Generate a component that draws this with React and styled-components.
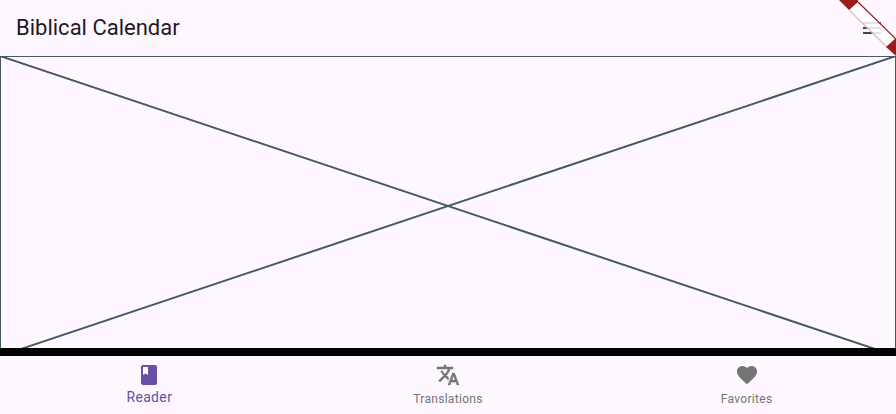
import React from 'react';
import styled, { createGlobalStyle } from 'styled-components';

const Global = createGlobalStyle`
  html, body { margin: 0; padding: 0; background: #fef7ff; }
  body { font-family: Roboto, "Liberation Sans", sans-serif; overflow: hidden; }
`;

const Screen = styled.div`
  position: relative;
  width: 896px;
  height: 414px;
  display: flex;
  flex-direction: column;
  overflow: hidden;
  background: #fef7ff;
`;

const AppBar = styled.header`
  height: 56px;
  flex: none;
  display: flex;
  align-items: center;
  justify-content: space-between;
  padding: 0 12px 0 16px;
  box-sizing: border-box;
`;

const Title = styled.h1`
  margin: 0;
  font-size: 22px;
  font-weight: 400;
  line-height: 28px;
  color: #1d1b20;
`;

const MenuIcon = styled.svg`
  width: 24px;
  height: 24px;
  fill: #49454f;
`;

const Ribbon = styled.svg`
  position: absolute;
  top: 0;
  right: 0;
  width: 80px;
  height: 60px;
  pointer-events: none;
`;

const Placeholder = styled.div`
  position: relative;
  height: 300px;
  flex: none;
  box-sizing: border-box;
  border: 1px solid #455a64;
  margin-bottom: -8px;
`;

const Cross = styled.svg`
  position: absolute;
  top: -1px;
  left: -1px;
  width: 896px;
  height: 300px;
  stroke: #455a64;
  stroke-width: 2;
  fill: none;
`;

const NavBar = styled.nav`
  position: relative;
  flex: 1;
  display: grid;
  grid-template-columns: repeat(3, 1fr);
  border-top: 8px solid #000;
  background: #fef7ff;
`;

const NavItem = styled.div`
  display: flex;
  flex-direction: column;
  align-items: center;
  padding-top: 7px;
  font-size: ${p => (p.$active ? '14px' : '12px')};
  line-height: ${p => (p.$active ? '20px' : '16px')};
  letter-spacing: ${p => (p.$active ? '0.35px' : '0.3px')};
  color: ${p => (p.$active ? '#6750a4' : '#757575')};
`;

const NavIcon = styled.svg`
  width: 24px;
  height: 24px;
  fill: currentColor;
  stroke: currentColor;
  stroke-width: ${p => (p.$bold ? '0.5' : '0')};
  margin-bottom: ${p => (p.$active ? '0' : '4px')};
`;

const items = [
  {
    label: 'Reader',
    active: true,
    d: 'M18 2H6c-1.1 0-2 .9-2 2v16c0 1.1.9 2 2 2h12c1.1 0 2-.9 2-2V4c0-1.1-.9-2-2-2zM6 4h5v8l-2.5-1.5L6 12V4z',
  },
  {
    label: 'Translations',
    bold: true,
    d: 'M12.87 15.07l-2.54-2.51.03-.03c1.74-1.94 2.98-4.17 3.71-6.53H17V4h-7V2H8v2H1v1.99h11.17C11.5 7.92 10.44 9.75 9 11.35 8.07 10.32 7.3 9.19 6.69 8h-2c.73 1.63 1.73 3.17 2.98 4.56l-5.09 5.02L4 19l5-5 3.11 3.11.76-2.04zM18.5 10h-2L12 22h2l1.12-3h4.75L21 22h2l-4.5-12zm-2.62 7l1.62-4.33L19.12 17h-3.24z',
  },
  {
    label: 'Favorites',
    d: 'M12 21.35l-1.45-1.32C5.4 15.36 2 12.28 2 8.5 2 5.42 4.42 3 7.5 3c1.74 0 3.41.81 4.5 2.09C13.09 3.81 14.76 3 16.5 3 19.58 3 22 5.42 22 8.5c0 3.78-3.4 6.86-8.55 11.54L12 21.35z',
  },
];

// faint cross lines on the white part of the ribbon
const ribbonTicks = [
  [859, 20, 868, 11],
  [868, 29, 877, 20],
  [877, 37, 886, 28],
];

export default function App() {
  return (
    <Screen>
      <Global />
      <AppBar>
        <Title>Biblical Calendar</Title>
        <MenuIcon viewBox="0 0 24 24"><path d="M3 18h18v-2H3v2zm0-5h18v-2H3v2zm0-7v2h18V6H3z" /></MenuIcon>
      </AppBar>
      <Placeholder>
        <Cross viewBox="0 0 896 300">
          <line x1="0" y1="0" x2="896" y2="300" />
          <line x1="896" y1="0" x2="0" y2="300" />
        </Cross>
      </Placeholder>
      <NavBar>
        {items.map(it => (
          <NavItem key={it.label} $active={it.active}>
            <NavIcon $active={it.active} $bold={it.bold} viewBox="0 0 24 24"><path d={it.d} /></NavIcon>
            {it.label}
          </NavItem>
        ))}
      </NavBar>
      <Ribbon viewBox="816 0 80 60">
        <polygon points="849,10 858,2 896,39 896,47 891,51" fill="#fff" fillOpacity="0.85" />
        {ribbonTicks.map(t => (
          <line key={t[0]} x1={t[0]} y1={t[1]} x2={t[2]} y2={t[3]} stroke="#f3ecec" strokeWidth="0.5" />
        ))}
        <line x1="849" y1="10" x2="887" y2="47" stroke="#dcbcbc" strokeWidth="1.2" />
        <line x1="858" y1="2" x2="896" y2="39" stroke="#9c1b1b" strokeWidth="1.2" />
        <polygon points="839,0 858,0 858,2 849,10" fill="#9c1b1b" />
        <polygon points="896,38 896,56 886,47" fill="#9c1b1b" />
      </Ribbon>
    </Screen>
  );
}
